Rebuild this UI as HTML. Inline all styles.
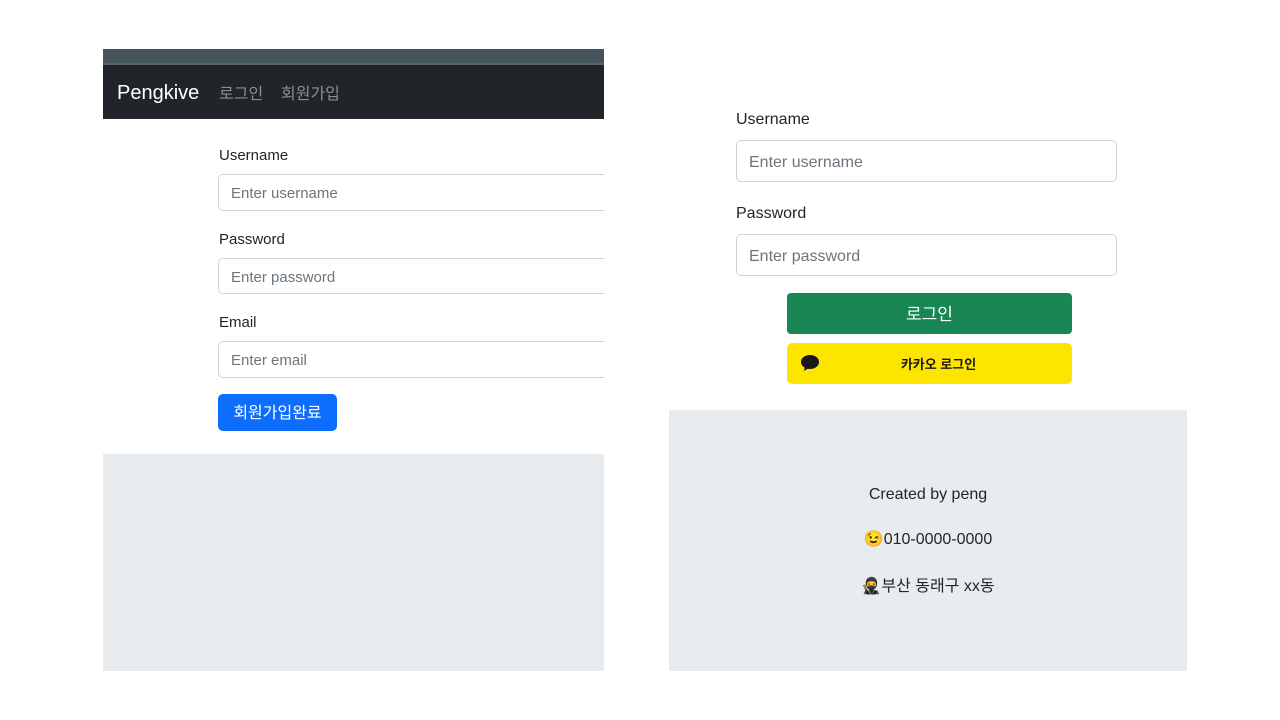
<!DOCTYPE html>
<html><head><meta charset="utf-8"><style>
*{margin:0;padding:0;box-sizing:border-box}
body{width:1280px;height:720px;background:#fff;position:relative;overflow:hidden;font-family:"Liberation Sans","Noto Sans CJK KR",sans-serif;color:#212529}
.a{position:absolute}
.lbl{font-size:15px;color:#212529}
.inp{border:1px solid #ced4da;border-radius:5px;background:#fff;color:#6c757d;font-size:15px;padding-left:12px;display:flex;align-items:center}
</style></head><body>
<div class="a" style="left:103px;top:49px;width:501px;height:16px;background:#46545d;border-bottom:2px solid #59656d"></div>
<div class="a" style="left:103px;top:65px;width:501px;height:54px;background:#212529"></div>
<div class="a" style="left:117px;top:82px;font-size:20px;color:#fff">Pengkive</div>
<div class="a" style="left:219px;top:80px;font-size:16px;color:#8c8f93">로그인</div>
<div class="a" style="left:281px;top:80px;font-size:16px;color:#8c8f93">회원가입</div>

<div class="a lbl" style="left:219px;top:147px">Username</div>
<div class="a inp" style="left:218px;top:174px;width:386px;height:37px;border-right:none;border-radius:5px 0 0 5px;padding-top:2px">Enter username</div>
<div class="a lbl" style="left:219px;top:231px">Password</div>
<div class="a inp" style="left:218px;top:258px;width:386px;height:36px;border-right:none;border-radius:5px 0 0 5px;padding-top:2px">Enter password</div>
<div class="a lbl" style="left:219px;top:314px">Email</div>
<div class="a inp" style="left:218px;top:341px;width:386px;height:37px;border-right:none;border-radius:5px 0 0 5px;padding-top:2px">Enter email</div>
<div class="a" style="left:218px;top:394px;width:119px;height:37px;background:#0d6efd;border-radius:5px;color:#fff;font-size:16px;display:flex;align-items:center;justify-content:center;padding-bottom:3px">회원가입완료</div>
<div class="a" style="left:103px;top:454px;width:501px;height:217px;background:#e9ecef"></div>

<div class="a lbl" style="left:736px;top:111px;font-size:16px">Username</div>
<div class="a inp" style="left:736px;top:140px;width:381px;height:42px;font-size:16px;padding-top:3px">Enter username</div>
<div class="a lbl" style="left:736px;top:205px;font-size:16px">Password</div>
<div class="a inp" style="left:736px;top:234px;width:381px;height:42px;font-size:16px;padding-top:3px">Enter password</div>
<div class="a" style="left:787px;top:293px;width:285px;height:41px;background:#198754;border-radius:4px;color:#fff;font-size:17px;display:flex;align-items:center;justify-content:center;padding-bottom:2px">로그인</div>
<div class="a" style="left:787px;top:343px;width:285px;height:41px;background:#fee500;border-radius:5px;color:#191919;font-size:13px;font-weight:bold;display:flex;align-items:center;justify-content:center;padding-left:18px">카카오 로그인</div>
<svg class="a" style="left:800px;top:354px" width="20" height="18" viewBox="0 0 20 18"><ellipse cx="10" cy="8" rx="9" ry="7" fill="#191919"/><path d="M5 12 L4 17 L9 14Z" fill="#191919"/></svg>
<div class="a" style="left:669px;top:410px;width:518px;height:261px;background:#e9ecef"></div>
<div class="a" style="left:669px;top:486px;width:518px;text-align:center;font-size:16px;color:#212529">Created by peng</div>
<div class="a" style="left:669px;top:529px;width:518px;text-align:center;font-size:16px;color:#212529">😉010-0000-0000</div>
<div class="a" style="left:669px;top:572px;width:518px;text-align:center;font-size:16px;color:#212529">🥷부산 동래구 xx동</div>
</body></html>
